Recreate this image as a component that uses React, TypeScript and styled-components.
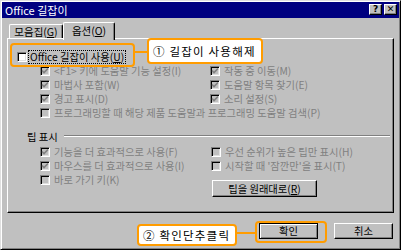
import React from 'react';
import styled, { createGlobalStyle } from 'styled-components';

const FONT = `'Noto Sans CJK KR', 'Noto Sans', sans-serif`;
const ORANGE = '#ff9c00';

const Global = createGlobalStyle`
  html, body { margin: 0; padding: 0; background: #c0c0c0; }
  body { font-family: ${FONT}; }
`;

const Window = styled.div`
  position: relative;
  width: 401px;
  height: 250px;
  box-sizing: border-box;
  background: #c0c0c0;
  border: 1px solid;
  border-color: #dfdfdf #000 #000 #dfdfdf;
  box-shadow: inset 1px 1px 0 #fff, inset -1px -1px 0 #808080;
  padding: 1px;
  display: flex;
  flex-direction: column;
  font-family: ${FONT};
  font-size: 10.3px;
  color: #000;
`;

const TitleBar = styled.div`
  height: 16px;
  background: #000080;
  color: #fff;
  display: flex;
  align-items: center;
  padding: 0 2px 0 3px;
  font-size: 11px;
  line-height: 16px;
`;

const TitleText = styled.span`
  flex: 1;
`;

const TitleButton = styled.div`
  width: 13px;
  height: 11px;
  box-sizing: border-box;
  background: #c0c0c0;
  border: 1px solid;
  border-color: #fff #000 #000 #fff;
  box-shadow: inset -1px -1px 0 #808080;
  margin-left: 2px;
  margin-top: -2px;
  display: flex;
  align-items: center;
  justify-content: center;
  color: #000;
  font-family: 'DejaVu Sans', sans-serif;
  font-weight: bold;
  font-size: 9px;
  line-height: 9px;
`;

const Body = styled.div`
  flex: 1;
  display: flex;
  flex-direction: column;
  padding: 0 5px;
`;

const TabRow = styled.div`
  display: flex;
  align-items: flex-end;
  margin-top: 4px;
  height: 16px;
  padding-left: 2px;
`;

const Tab = styled.div<{ $active?: boolean }>`
  position: relative;
  z-index: ${(p) => (p.$active ? 2 : 1)};
  width: ${(p) => (p.$active ? 52 : 54)}px;
  height: ${(p) => (p.$active ? 18 : 14)}px;
  margin-bottom: ${(p) => (p.$active ? -2 : 0)}px;
  box-sizing: border-box;
  background: #c0c0c0;
  border-top: 1px solid #fff;
  border-left: 1px solid #fff;
  border-right: 1px solid #000;
  border-radius: 2px 2px 0 0;
  box-shadow: inset -1px 0 0 #808080;
  display: flex;
  justify-content: center;
  padding-top: ${(p) => (p.$active ? 1 : 0)}px;
  font-size: 10.5px;
  line-height: 13px;
`;

const Panel = styled.div`
  position: relative;
  height: 175px;
  box-sizing: border-box;
  border: 1px solid;
  border-color: #fff #000 #000 #fff;
  box-shadow: inset -1px -1px 0 #808080;
  padding: 10px 3px 0 9px;
  display: flex;
  flex-direction: column;
`;

const Row = styled.div<{ $span?: boolean }>`
  display: flex;
  align-items: center;
  height: 14px;
  gap: 4px;
  white-space: nowrap;
  grid-column: ${(p) => (p.$span ? '1 / span 2' : 'auto')};
`;

const MainRow = styled(Row)`
  height: 15px;
  gap: 2px;
`;

const Label = styled.span<{ $disabled?: boolean }>`
  color: ${(p) => (p.$disabled ? '#808080' : '#000')};
  line-height: 12px;
`;

const FocusLabel = styled(Label)`
  outline: 1px dotted #000;
  padding: 0 1px;
`;

const Mn = styled.u`
  text-decoration: underline;
`;

const Box = styled.span<{ $disabled?: boolean }>`
  width: 10px;
  height: 10px;
  flex: none;
  box-sizing: border-box;
  border: 1px solid;
  border-color: #808080 #fff #fff #808080;
  box-shadow: inset 1px 1px 0 #000, inset -1px -1px 0 #dfdfdf;
  background: ${(p) => (p.$disabled ? '#c0c0c0' : '#fff')};
  display: flex;
  align-items: center;
  justify-content: center;
`;

const OptionGrid = styled.div`
  display: grid;
  grid-template-columns: 170px auto;
  margin-left: 23px;
`;

const Heading = styled.div`
  display: flex;
  align-items: center;
  height: 14px;
  margin-top: 9px;
  margin-left: 10px;
  gap: 6px;
`;

const Etch = styled.div`
  flex: 1;
  height: 1px;
  background: #808080;
  border-bottom: 1px solid #fff;
`;

const TipGrid = styled.div`
  display: grid;
  grid-template-columns: 171px auto;
  margin-left: 23px;
  margin-top: 2px;
`;

const Column = styled.div`
  display: flex;
  flex-direction: column;
`;

const Button = styled.div<{ $default?: boolean; $w: number; $h?: number }>`
  width: ${(p) => p.$w}px;
  height: ${(p) => p.$h ?? 16}px;
  box-sizing: border-box;
  background: #c0c0c0;
  border: 1px solid;
  border-color: ${(p) => (p.$default ? '#000' : '#fff #000 #000 #fff')};
  box-shadow: ${(p) =>
    p.$default
      ? 'inset 1px 1px 0 #fff, inset -1px -1px 0 #808080'
      : 'inset -1px -1px 0 #808080'};
  display: flex;
  align-items: center;
  justify-content: center;
  line-height: 12px;
  font-size: 10.3px;
`;

const TipButton = styled(Button)`
  margin-top: 7px;
  margin-left: 1px;
`;

const Footer = styled.div`
  display: flex;
  justify-content: flex-end;
  gap: 16px;
  margin-top: 10px;
  padding-right: 1px;
`;

const Highlight = styled.div<{ $x: number; $y: number; $w: number; $h: number }>`
  position: absolute;
  left: ${(p) => p.$x}px;
  top: ${(p) => p.$y}px;
  width: ${(p) => p.$w}px;
  height: ${(p) => p.$h}px;
  box-sizing: border-box;
  border: 2px solid ${ORANGE};
  border-radius: 4px;
  z-index: 5;
`;

const Callout = styled(Highlight)`
  background: #fff;
  display: flex;
  align-items: center;
  padding-left: 4px;
  font-size: 11.5px;
  letter-spacing: 1.2px;
  white-space: nowrap;
`;

const Connector = styled.div<{ $x: number; $y: number; $w: number }>`
  position: absolute;
  left: ${(p) => p.$x}px;
  top: ${(p) => p.$y}px;
  width: ${(p) => p.$w}px;
  height: 2px;
  background: ${ORANGE};
  z-index: 5;
`;

const Check = ({ color }: { color: string }) => (
  <svg width="8" height="8" viewBox="0 0 8 8">
    <path d="M1 3.5 L3 5.5 L7 1.5" stroke={color} strokeWidth="1.6" fill="none" />
  </svg>
);

const CheckBox = ({ checked, disabled }: { checked?: boolean; disabled?: boolean }) => (
  <Box $disabled={disabled}>{checked && <Check color={disabled ? '#808080' : '#000'} />}</Box>
);

const Opt = ({
  checked,
  children,
  span,
}: {
  checked?: boolean;
  children: React.ReactNode;
  span?: boolean;
}) => (
  <Row $span={span}>
    <CheckBox checked={checked} disabled />
    <Label $disabled>{children}</Label>
  </Row>
);

export default function App() {
  return (
    <>
      <Global />
      <Window>
        <TitleBar>
          <TitleText>Office 길잡이</TitleText>
          <TitleButton>?</TitleButton>
          <TitleButton>✕</TitleButton>
        </TitleBar>
        <Body>
          <TabRow>
            <Tab>
              모음집(<Mn>G</Mn>)
            </Tab>
            <Tab $active>
              옵션(<Mn>O</Mn>)
            </Tab>
          </TabRow>
          <Panel>
            <MainRow>
              <CheckBox />
              <FocusLabel>
                Office 길잡이 사용(<Mn>U</Mn>)
              </FocusLabel>
            </MainRow>
            <OptionGrid>
              <Opt checked>&lt;F1&gt; 키에 도움말 기능 설정(I)</Opt>
              <Opt checked>작동 중 이동(M)</Opt>
              <Opt checked>마법사 포함(W)</Opt>
              <Opt checked>도움말 항목 찾기(E)</Opt>
              <Opt checked>경고 표시(D)</Opt>
              <Opt checked>소리 설정(S)</Opt>
              <Opt span>프로그래밍할 때 해당 제품 도움말과 프로그래밍 도움말 검색(P)</Opt>
            </OptionGrid>
            <Heading>
              <span>팁 표시</span>
              <Etch />
            </Heading>
            <TipGrid>
              <Column>
                <Opt checked>기능을 더 효과적으로 사용(F)</Opt>
                <Opt checked>마우스를 더 효과적으로 사용(I)</Opt>
                <Opt>바로 가기 키(K)</Opt>
              </Column>
              <Column>
                <Opt>우선 순위가 높은 팁만 표시(H)</Opt>
                <Opt>시작할 때 '잠깐만'을 표시(T)</Opt>
                <TipButton $w={105} $h={17}>
                  팁을 원래대로(<Mn>R</Mn>)
                </TipButton>
              </Column>
            </TipGrid>
          </Panel>
          <Footer>
            <Button $default $w={59}>
              확인
            </Button>
            <Button $w={59}>취소</Button>
          </Footer>
        </Body>

        <Highlight $x={9} $y={42} $w={125} $h={24} />
        <Connector $x={133} $y={50} $w={14} />
        <Callout $x={146} $y={37} $w={116} $h={26}>
          ① 길잡이 사용해제
        </Callout>

        <Highlight $x={254} $y={220} $w={72} $h={22} />
        <Connector $x={234} $y={231} $w={21} />
        <Callout $x={136} $y={223} $w={100} $h={22}>
          ② 확인단추클릭
        </Callout>
      </Window>
    </>
  );
}
